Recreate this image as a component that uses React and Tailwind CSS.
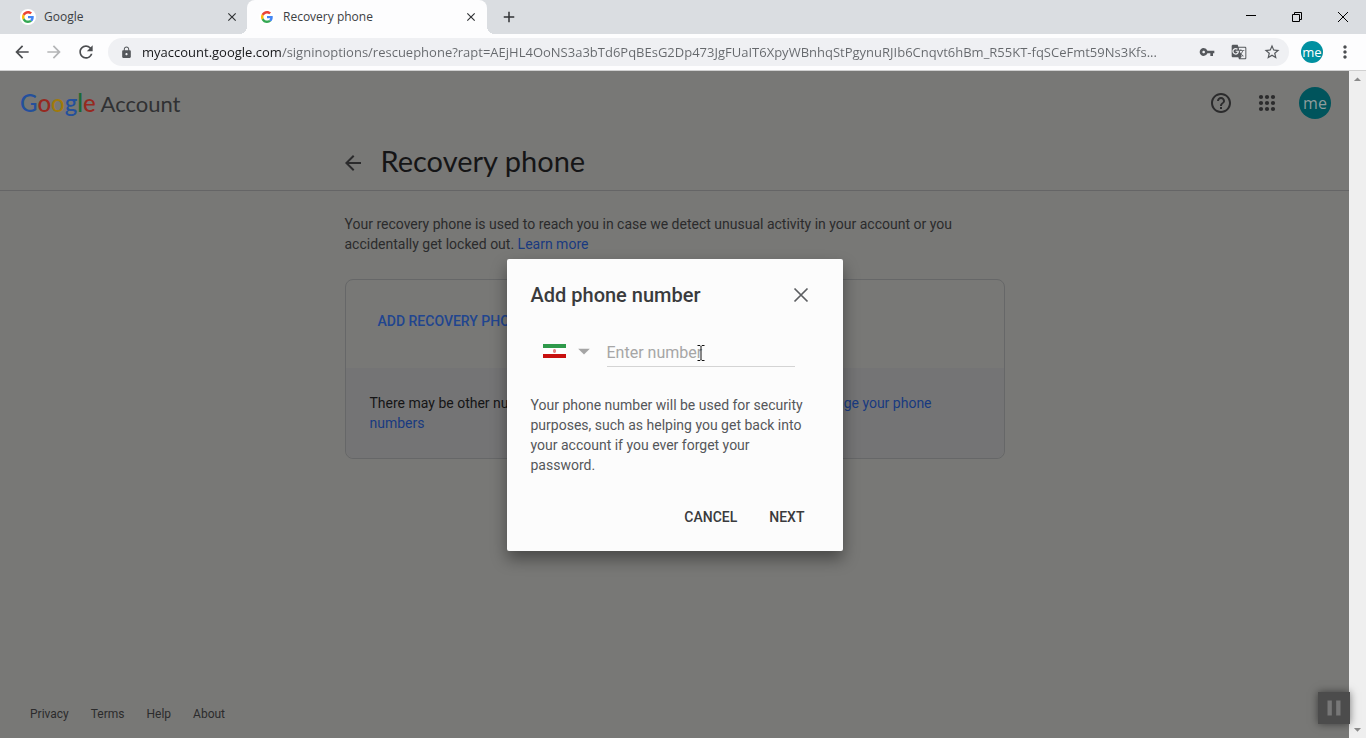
import React, { useState } from 'react';
import { MdArrowBack, MdArrowForward, MdRefresh, MdLock, MdVpnKey, MdGTranslate, MdStarBorder, MdMoreVert, MdHelpOutline, MdClose, MdArrowDropDown, MdAdd, MdPause } from 'react-icons/md';

const ADDRESS = 'myaccount.google.com/signinoptions/rescuephone?rapt=AEjHL4OoNS3a3bTd6PqBEsG2Dp473JgFUaIT6XpyWBnhqStPgynuRJIb6Cnqvt6hBm_R55KT-fqSCeFmt59Ns3Kfs...';

const FOOTER_LINKS = ['Privacy', 'Terms', 'Help', 'About'];

function GoogleG() {
  return (
    <svg viewBox="0 0 48 48" className="w-3 h-3" aria-hidden="true">
      <path fill="#EA4335" d="M24 9.5c3.54 0 6.71 1.22 9.21 3.6l6.85-6.85C35.9 2.38 30.47 0 24 0 14.62 0 6.51 5.38 2.56 13.22l7.98 6.19C12.43 13.72 17.74 9.5 24 9.5z" />
      <path fill="#4285F4" d="M46.98 24.55c0-1.57-.15-3.09-.38-4.55H24v9.02h12.94c-.58 2.96-2.26 5.48-4.78 7.18l7.73 6c4.51-4.18 7.09-10.36 7.09-17.65z" />
      <path fill="#FBBC05" d="M10.53 28.59c-.48-1.45-.76-2.99-.76-4.59s.27-3.14.76-4.59l-7.98-6.19C.92 16.46 0 20.12 0 24c0 3.88.92 7.54 2.56 10.78l7.97-6.19z" />
      <path fill="#34A853" d="M24 48c6.48 0 11.93-2.13 15.89-5.81l-7.73-6c-2.15 1.45-4.92 2.3-8.16 2.3-6.26 0-11.57-4.22-13.47-9.91l-7.98 6.19C6.51 42.62 14.62 48 24 48z" />
    </svg>
  );
}

function AppsGrid() {
  return (
    <svg viewBox="0 0 24 24" className="w-6 h-6" fill="currentColor" aria-hidden="true">
      {[6, 12, 18].map(y => [6, 12, 18].map(x => <circle key={`${x}-${y}`} cx={x} cy={y} r="2.100" />))}
    </svg>
  );
}

function Tab({ title, active }) {
  return (
    <div className={active ? 'relative flex items-center w-60 h-full pl-3 pr-2 rounded-t-lg bg-[#fdfdfe]' : 'flex items-center w-[247px] h-full pl-5 pr-[7px]'}>
      <span className="flex items-center justify-center w-4 h-4 rounded-full bg-white"><GoogleG /></span>
      <button className="flex-1 pl-2 text-left text-xs text-[#3c4043]">{title}</button>
      <button aria-label={`Close ${title}`} className="flex items-center justify-center w-4 h-4 text-[#303235]"><MdClose size={14} /></button>
      {active && (
        <>
          <span className="absolute bottom-0 -left-2 w-2 h-2 bg-[radial-gradient(circle_at_0_0,#dadde1_8px,#fdfdfe_8px)]" />
          <span className="absolute bottom-0 -right-2 w-2 h-2 bg-[radial-gradient(circle_at_100%_0,#dadde1_8px,#fdfdfe_8px)]" />
        </>
      )}
    </div>
  );
}

function BrowserBar() {
  const [url, setUrl] = useState(ADDRESS);

  return (
    <header className="font-['Open_Sans',sans-serif]">
      <div className="flex items-center h-[34px] bg-[#dadde1]">
        <Tab title="Google" />
        <Tab title="Recovery phone" active />
        <button aria-label="New tab" className="flex items-center justify-center w-11 text-[#303235]"><MdAdd size={18} /></button>
        <div className="flex ml-auto text-black">
          <button aria-label="Minimize" className="flex items-center justify-center w-[46px] h-7">
            <svg viewBox="0 0 10 10" className="w-[10px] h-[10px]" stroke="currentColor"><path d="M0 3.5h10" /></svg>
          </button>
          <button aria-label="Restore" className="flex items-center justify-center w-[46px] h-7">
            <svg viewBox="0 0 10 10" className="w-[10px] h-[10px]" fill="none" stroke="currentColor"><path d="M.5 2.5h7v7h-7zM2.5 2.5v-2h7v7h-2" /></svg>
          </button>
          <button aria-label="Close" className="flex items-center justify-center w-[46px] h-7">
            <svg viewBox="0 0 10 10" className="w-[10px] h-[10px]" stroke="currentColor"><path d="M0 0l10 10M10 0L0 10" /></svg>
          </button>
        </div>
      </div>

      <div className="flex items-center h-[37px] pl-3 pr-[11px] bg-[#fdfdfe] border-b border-[#d0d0d0]">
        <div className="flex items-center gap-3 text-[#4c4e51]">
          <button aria-label="Back"><MdArrowBack size={20} /></button>
          <button aria-label="Forward" className="text-[#b4b5b7]"><MdArrowForward size={20} /></button>
          <button aria-label="Reload"><MdRefresh size={20} /></button>
        </div>
        <div className="flex flex-1 items-center h-7 ml-3 pl-3 pr-2 rounded-full bg-[#eff0f3] text-[#55585c]">
          <MdLock size={13} className="shrink-0" />
          <input
            aria-label="Address"
            value={url}
            onChange={e => setUrl(e.target.value)}
            className="flex-1 min-w-0 h-6 ml-[9px] text-[13px] text-transparent caret-black bg-clip-text bg-[linear-gradient(90deg,#17181a_139px,#65686c_139px)] outline-none"
          />
          <div className="flex items-center gap-4 ml-4">
            <button aria-label="Passwords"><MdVpnKey size={16} /></button>
            <button aria-label="Translate"><MdGTranslate size={16} /></button>
            <button aria-label="Bookmark"><MdStarBorder size={18} /></button>
          </div>
        </div>
        <button aria-label="Profile" className="w-[22px] h-[22px] ml-3 rounded-full bg-[#0090a0] text-white text-[13px] font-medium leading-5">me</button>
        <button aria-label="Menu" className="ml-3 text-[#4c4e51]"><MdMoreVert size={20} /></button>
      </div>
    </header>
  );
}

function PhoneDialog() {
  const [phone, setPhone] = useState('');

  return (
    <div role="dialog" aria-labelledby="dialog-title" className="w-[336px] p-6 pb-4 rounded-xs bg-[#fcfcfc] shadow-[0_8px_16px_rgba(0,0,0,0.4)]">
      <div className="flex items-center justify-between pr-[6px]">
        <h2 id="dialog-title" className="text-xl leading-6 font-medium text-[#3a3b3d]">Add phone number</h2>
        <button aria-label="Close dialog" className="text-[#5c5e61]">
          <svg viewBox="0 0 24 24" className="w-6 h-6" stroke="currentColor" strokeWidth="1.700"><path d="M5.500 5.500l13 13M18.500 5.500l-13 13" /></svg>
        </button>
      </div>

      <div className="flex items-center mt-7 pl-3 pr-6 h-8">
        <button aria-label="Country: Iran" className="flex items-center gap-1 w-16 text-[#a5a5a5]">
          <svg viewBox="0 0 23 14" className="w-[23px] h-[14px]" aria-hidden="true">
            <path fill="#fff" d="M0 0h23v14H0z" />
            <path fill="#2f9a4b" d="M0 0h23v4H0z" />
            <path fill="#c8100f" d="M0 10h23v4H0z" />
            <path fill="#e88a8a" d="M11 5h1l1 1v2l-1 1h-1l-1-1V6z" />
          </svg>
          <MdArrowDropDown size={28} />
        </button>
        <input
          type="tel"
          aria-label="Phone number"
          placeholder="Enter number"
          value={phone}
          onChange={e => setPhone(e.target.value)}
          className="flex-1 min-w-0 h-8 pt-1 border-b border-[#d4d4d4] text-base placeholder:text-[#a6a6a6] outline-none"
        />
      </div>

      <p className="mt-7 pr-1 text-sm leading-5 text-[#55575a]">
        Your phone number will be used for security purposes, such as helping you get back into your account if you ever forget your password.
      </p>

      <div className="flex justify-end gap-2 mt-6 pr-[2px] text-sm font-medium text-[#3a3b3d]">
        <button className="h-9 px-3">CANCEL</button>
        <button className="h-9 px-3">NEXT</button>
      </div>
    </div>
  );
}

function AccountPage() {
  return (
    <div className="relative flex flex-col flex-1 bg-[#787876] text-[#2b2b2c]">
      <div className="flex items-center h-16 pl-5 pr-[18px]">
        <a href="#home" className="flex-1 font-['Lato',sans-serif] text-[22px] leading-8 text-[#303133]">
          <span className="text-2xl font-medium">
            <span className="text-[#24509c]">G</span>
            <span className="text-[#96291f]">o</span>
            <span className="text-[#a17a0b]">o</span>
            <span className="text-[#24509c]">g</span>
            <span className="text-[#1c6a32]">l</span>
            <span className="text-[#96291f]">e</span>
          </span>{' '}
          Account
        </a>
        <div className="flex items-center">
          <button aria-label="Help"><MdHelpOutline size={24} /></button>
          <button aria-label="Google apps" className="ml-[22px]"><AppsGrid /></button>
          <button aria-label="Account" className="w-8 h-8 ml-5 rounded-full bg-[#00545c] text-[#8f9c9d] text-base leading-7 font-medium font-['Open_Sans',sans-serif]">me</button>
        </div>
      </div>

      <div className="h-14 border-b border-[#656566]">
        <div className="flex items-center gap-4 w-[660px] max-w-full h-full mx-auto">
          <button aria-label="Back to account" className="-ml-1"><MdArrowBack size={24} /></button>
          <h1 className="pb-1 font-['Lato',sans-serif] text-[29px] text-[#151516]">Recovery phone</h1>
        </div>
      </div>

      <main className="w-[660px] max-w-full mx-auto pt-[23px] text-sm leading-5">
        <p>
          Your recovery phone is used to reach you in case we detect unusual activity in your account or you accidentally get locked out. <a href="#learn" className="text-[#183a80]">Learn more</a>
        </p>
        <section className="mt-[25px] rounded-lg border border-[#666768]">
          <div className="h-[88px] px-8 pt-[31px]">
            <button className="font-medium text-[#21458f]">ADD RECOVERY PHONE</button>
          </div>
          <div className="px-6 py-[25px] rounded-b-lg bg-[#747475]">
            <p className="text-[#151516]">
              There may be other numbers in your account used by Google services. <a href="#numbers" className="text-[#183a80]">Manage your phone numbers</a>
            </p>
          </div>
        </section>
      </main>

      <footer className="flex gap-[22px] mt-auto px-[30px] pb-4 text-xs">
        {FOOTER_LINKS.map(name => <a key={name} href={`#${name}`}>{name}</a>)}
      </footer>

      <div className="absolute inset-0 flex items-center justify-center">
        <PhoneDialog />
      </div>
      <svg viewBox="0 0 8 16" className="absolute left-1/2 top-[274px] w-2 h-4 ml-[22px]" fill="none" stroke="#111" aria-hidden="true">
        <path d="M.5 .5h2.500l1 1 1-1h2.500M4 1.500v13M.5 15.500h2.500l1-1 1 1h2.500" />
      </svg>
      <button aria-label="Pause" className="absolute -right-px bottom-[14px] flex items-center justify-center w-8 h-8 bg-[#4c4c4c] text-[#777] shadow-[0_0_8px_rgba(0,0,0,0.5)]"><MdPause size={26} /></button>
    </div>
  );
}

export default function App() {
  return (
    <div className="flex flex-col min-h-screen font-['Roboto',sans-serif]">
      <BrowserBar />
      <div className="flex flex-1">
        <AccountPage />
        <div className="flex flex-col justify-between items-center w-[17px] bg-[#efefef] text-[#8a8a8a]">
          <MdArrowDropDown size={17} className="rotate-180" />
          <MdArrowDropDown size={17} />
        </div>
      </div>
    </div>
  );
}
